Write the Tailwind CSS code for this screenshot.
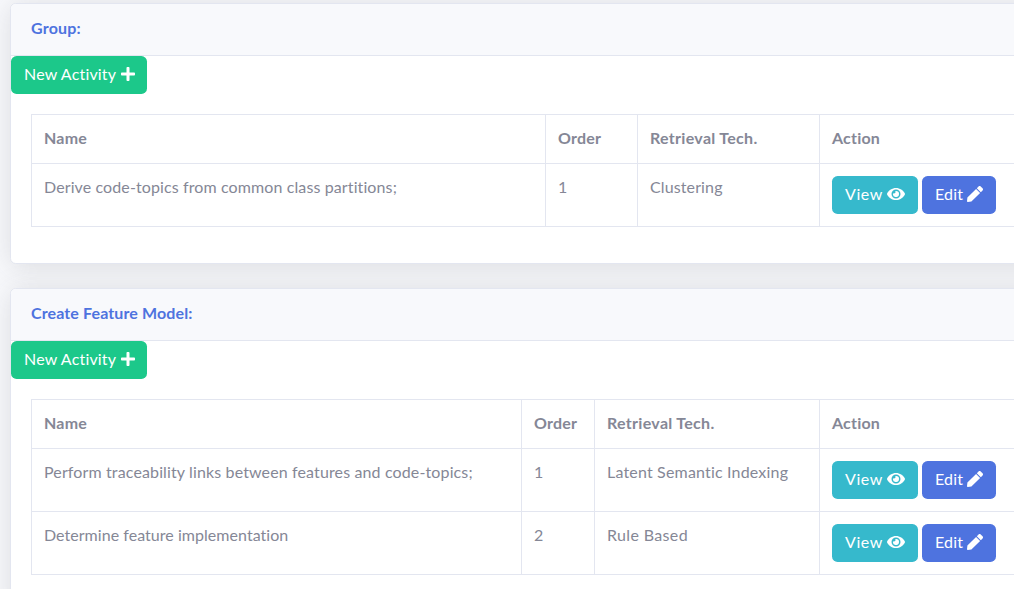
<!DOCTYPE html>
<html lang="en">
<head>
<meta charset="utf-8">
<title>Activities</title>
<script src="https://cdn.jsdelivr.net/npm/@tailwindcss/browser@4"></script>
</head>
<body class="h-[589px] overflow-hidden bg-[#f8f9fc] font-['Lato',sans-serif] text-base leading-[22px] text-[#858796]">
<svg class="hidden">
  <symbol id="plus" viewBox="0 0 448 512"><path d="M416 208H272V64c0-17.67-14.33-32-32-32h-32c-17.67 0-32 14.33-32 32v144H32c-17.67 0-32 14.33-32 32v32c0 17.67 14.33 32 32 32h144v144c0 17.67 14.33 32 32 32h32c17.67 0 32-14.33 32-32V304h144c17.67 0 32-14.33 32-32v-32c0-17.67-14.33-32-32-32z"/></symbol>
  <symbol id="eye" viewBox="0 0 576 512"><path d="M572.52 241.4C518.29 135.59 410.93 64 288 64S57.68 135.64 3.48 241.41a32.35 32.35 0 0 0 0 29.19C57.71 376.41 165.07 448 288 448s230.32-71.64 284.52-177.41a32.35 32.35 0 0 0 0-29.19zM288 400a144 144 0 1 1 144-144 143.93 143.93 0 0 1-144 144zm0-240a95.31 95.31 0 0 0-25.31 3.79 47.85 47.85 0 0 1-66.9 66.9A95.78 95.78 0 1 0 288 160z"/></symbol>
  <symbol id="pen" viewBox="0 0 512 512"><path d="M290.74 93.24l128.02 128.02-277.99 277.99-114.14 12.6C11.35 513.54-1.56 500.62.14 485.34l12.7-114.22 277.9-277.88zm207.2-19.06l-60.11-60.11c-18.75-18.75-49.16-18.75-67.91 0l-56.55 56.55 128.02 128.02 56.55-56.55c18.75-18.76 18.75-49.16 0-67.91z"/></symbol>
</svg>
<div class="h-[589px] w-full overflow-hidden">
<main class="flex w-[1100px] flex-col gap-6 pt-[3px] pl-2.5">
  <section class="h-[261px] shrink-0 rounded-[5.6px] border border-[#e3e6f0] bg-white shadow-[0_2.4px_28px_0_rgba(58,59,69,0.15)]">
    <h6 class="h-[52px] rounded-t-[5px] border-b border-[#e3e6f0] bg-[#f8f9fc] px-5 pt-[13px] font-bold tracking-[0.2px] text-[#4e73df]">Group:</h6>
    <a class="flex h-[38px] w-[136px] items-center rounded-[5.6px] bg-[#1cc88a] pb-0.5 pl-[13px] text-white"><span class="w-[96.5px] whitespace-nowrap tracking-[0.18px]">New Activity</span><svg class="h-4 w-3.5 fill-current"><use href="#plus"/></svg></a>
    <div class="px-5 pt-5">
      <table class="w-full table-fixed border-collapse text-left [&_td]:border [&_td]:border-[#e3e6f0] [&_td]:p-3 [&_td]:align-top [&_th]:border [&_th]:border-[#e3e6f0] [&_th]:p-3 [&_th]:align-top [&_th]:font-bold">
        <colgroup><col class="w-[514px]"><col class="w-[92px]"><col class="w-[182px]"><col></colgroup>
        <tr class="h-[49px]"><th class="tracking-[0.2px]">Name</th><th class="tracking-[0.2px]">Order</th><th class="tracking-[0.3px]">Retrieval Tech.</th><th class="tracking-[0.2px]">Action</th></tr>
        <tr class="h-[63px]"><td class="tracking-[0.11px]">Derive code-topics from common class partitions;</td><td>1</td><td class="tracking-[0.12px]">Clustering</td>
          <td><div class="flex gap-1 text-white"><a class="flex h-[38px] w-[86px] items-center rounded-[5.6px] bg-[#36b9cc] pb-0.5 pl-[13px]"><span class="w-[41.5px] tracking-[0.6px]">View</span><svg class="h-4 w-[18px] fill-current"><use href="#eye"/></svg></a><a class="flex h-[38px] w-[74px] items-center rounded-[5.6px] bg-[#4e73df] pb-0.5 pl-[13px]"><span class="w-8 tracking-[0.2px]">Edit</span><svg class="size-4 fill-current"><use href="#pen"/></svg></a></div></td></tr>
      </table>
    </div>
  </section>
  <section class="h-[324px] shrink-0 rounded-[5.6px] border border-[#e3e6f0] bg-white shadow-[0_2.4px_28px_0_rgba(58,59,69,0.15)]">
    <h6 class="h-[52px] rounded-t-[5px] border-b border-[#e3e6f0] bg-[#f8f9fc] px-5 pt-[13px] font-bold tracking-[0.12px] text-[#4e73df]">Create Feature Model:</h6>
    <a class="flex h-[38px] w-[136px] items-center rounded-[5.6px] bg-[#1cc88a] pb-0.5 pl-[13px] text-white"><span class="w-[96.5px] whitespace-nowrap tracking-[0.18px]">New Activity</span><svg class="h-4 w-3.5 fill-current"><use href="#plus"/></svg></a>
    <div class="px-5 pt-5">
      <table class="w-full table-fixed border-collapse text-left [&_td]:border [&_td]:border-[#e3e6f0] [&_td]:p-3 [&_td]:align-top [&_th]:border [&_th]:border-[#e3e6f0] [&_th]:p-3 [&_th]:align-top [&_th]:font-bold">
        <colgroup><col class="w-[490px]"><col class="w-[73px]"><col class="w-[225px]"><col></colgroup>
        <tr class="h-[49px]"><th class="tracking-[0.2px]">Name</th><th class="tracking-[0.2px]">Order</th><th class="tracking-[0.3px]">Retrieval Tech.</th><th class="tracking-[0.2px]">Action</th></tr>
        <tr class="h-[63px]"><td class="tracking-[0.13px]">Perform traceability links between features and code-topics;</td><td>1</td><td class="tracking-[0.18px]">Latent Semantic Indexing</td>
          <td><div class="flex gap-1 text-white"><a class="flex h-[38px] w-[86px] items-center rounded-[5.6px] bg-[#36b9cc] pb-0.5 pl-[13px]"><span class="w-[41.5px] tracking-[0.6px]">View</span><svg class="h-4 w-[18px] fill-current"><use href="#eye"/></svg></a><a class="flex h-[38px] w-[74px] items-center rounded-[5.6px] bg-[#4e73df] pb-0.5 pl-[13px]"><span class="w-8 tracking-[0.2px]">Edit</span><svg class="size-4 fill-current"><use href="#pen"/></svg></a></div></td></tr>
        <tr class="h-[63px]"><td class="tracking-[0.04px]">Determine feature implementation</td><td>2</td><td class="tracking-[0.35px]">Rule Based</td>
          <td><div class="flex gap-1 text-white"><a class="flex h-[38px] w-[86px] items-center rounded-[5.6px] bg-[#36b9cc] pb-0.5 pl-[13px]"><span class="w-[41.5px] tracking-[0.6px]">View</span><svg class="h-4 w-[18px] fill-current"><use href="#eye"/></svg></a><a class="flex h-[38px] w-[74px] items-center rounded-[5.6px] bg-[#4e73df] pb-0.5 pl-[13px]"><span class="w-8 tracking-[0.2px]">Edit</span><svg class="size-4 fill-current"><use href="#pen"/></svg></a></div></td></tr>
      </table>
    </div>
  </section>
</main>
</div>
</body>
</html>
